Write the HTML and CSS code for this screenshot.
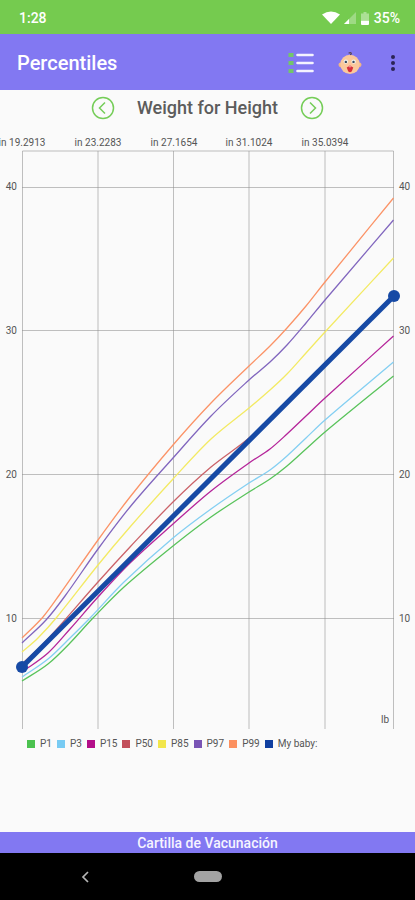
FILE: index.html
```html
<!DOCTYPE html>
<html lang="en">
<head>
<meta charset="utf-8">
<meta name="viewport" content="width=device-width, initial-scale=1">
<title>Percentiles</title>
<link rel="stylesheet" href="styles.css">
</head>
<body>
<div class="status">
  <span>1:28</span>
  <div class="status-icons">
    <svg width="18" height="14" viewBox="0 0 18 14" aria-hidden="true"><path d="M0 3.500Q9-2.500 18 3.500L9 13Z" fill="#fff"/></svg>
    <svg width="12" height="12" viewBox="0 0 12 12" aria-hidden="true"><path d="M12 0V12H0Z" fill="#fff" opacity=".3"/><path d="M5 7V12H0Z" fill="#fff"/></svg>
    <svg width="8" height="13" viewBox="0 0 8 13" aria-hidden="true"><path d="M2.500 0h3v1.500H8V8H0V1.500h2.500z" fill="#fff" opacity=".4"/><path d="M0 8.500h8V12q0 1-1 1H1q-1 0-1-1z" fill="#fff"/></svg>
    <span>35%</span>
  </div>
</div>
<header class="appbar">
  <h1>Percentiles</h1>
  <div class="actions">
    <button type="button" aria-label="List">
      <svg width="26" height="22" viewBox="0 0 26 22"><path d="M.5 1h5v4h-5zM.5 9h5v4h-5zM.5 17h5v4h-5z" fill="#73c66a"/><path d="M9.500 3h15M9.500 11h15M9.500 19h15" stroke="#f4f3ff" stroke-width="2.600" stroke-linecap="round"/></svg>
    </button>
    <button type="button" aria-label="Baby">
      <svg width="24" height="24" viewBox="0 0 26 26"><circle cx="3" cy="15" r="2.500" fill="#f1b586"/><circle cx="23" cy="15" r="2.500" fill="#f1b586"/><ellipse cx="13" cy="14.500" rx="10.500" ry="10.500" fill="#fbc89c"/><path d="M11.500 2.500q2-1.500 3 0 0 1.500-1.500 1.500" fill="none" stroke="#594457" stroke-width="1.200"/><circle cx="8.500" cy="11.500" r="2.400" fill="#eef1ef"/><circle cx="17" cy="11.500" r="2.400" fill="#eef1ef"/><circle cx="8.500" cy="11.800" r="1.300" fill="#3d4a5e"/><circle cx="16.800" cy="11.800" r="1.300" fill="#3d4a5e"/><path d="M9.500 18q3.500-3.500 7 0l-1.500 4q-2 2-4 0z" fill="#d8303c"/><circle cx="13" cy="16.500" r="1.300" fill="#f08f91"/></svg>
    </button>
    <button type="button" aria-label="More options">
      <svg width="6" height="18" viewBox="0 0 6 18"><g fill="#2b2456"><circle cx="3" cy="3" r="2"/><circle cx="3" cy="9" r="2"/><circle cx="3" cy="15" r="2"/></g></svg>
    </button>
  </div>
</header>
<main>
  <div class="picker">
    <button type="button" aria-label="Previous chart">
      <svg width="24" height="24" viewBox="0 0 24 24" fill="none" stroke="#75cd58"><circle cx="12" cy="12" r="10.500" stroke-width="1.500"/><path d="M14 6.500L8.500 12l5.500 5.500" stroke-width="1.500"/></svg>
    </button>
    <h2>Weight for Height</h2>
    <button type="button" aria-label="Next chart">
      <svg width="24" height="24" viewBox="0 0 24 24" fill="none" stroke="#75cd58"><circle cx="12" cy="12" r="10.500" stroke-width="1.500"/><path d="M10 6.500L15.500 12 10 17.500" stroke-width="1.500"/></svg>
    </button>
  </div>
  <svg class="chart" viewBox="0 125 415 608" role="img" aria-label="Weight for Height percentiles">
    <path class="grid" d="M22.500 729V151H393.500V729M98 151V729M173.500 151V729M249 151V729M325 151V729M22 187.500H394M22 330.500H394M22 474.500H394M22 618.500H394"/>
    <g class="ticks" text-anchor="middle">
      <text x="22" y="146">in 19.2913</text><text x="98" y="146">in 23.2283</text><text x="174" y="146">in 27.1654</text><text x="249" y="146">in 31.1024</text><text x="325" y="146">in 35.0394</text>
    </g>
    <g class="ticks" text-anchor="end">
      <text x="17" y="190">40</text><text x="17" y="334">30</text><text x="17" y="478">20</text><text x="17" y="622">10</text><text x="389" y="723">lb</text>
    </g>
    <g class="ticks">
      <text x="399" y="190">40</text><text x="399" y="334">30</text><text x="399" y="478">20</text><text x="399" y="622">10</text>
    </g>
    <g id="curves" class="curves"></g>
    <path class="baby-line" d="M22 667L394 296"/>
    <circle class="baby-dot" cx="22" cy="667" r="6"/>
    <circle class="baby-dot" cx="394" cy="296" r="6"/>
  </svg>
  <ul class="legend">
    <li class="p1">P1</li><li class="p3">P3</li><li class="p15">P15</li><li class="p50">P50</li><li class="p85">P85</li><li class="p97">P97</li><li class="p99">P99</li><li class="baby">My baby:</li>
  </ul>
</main>
<footer class="banner">Cartilla de Vacunación</footer>
<nav class="sysnav">
  <button type="button" aria-label="Back"><svg width="8" height="12" viewBox="0 0 8 12"><path d="M7 1L2 6l5 5" fill="none" stroke="#b5b5b5" stroke-width="1.700"/></svg></button>
  <button type="button" class="pill" aria-label="Home"></button>
  <span></span>
</nav>
<script src="chart.js"></script>
</body>
</html>
```
FILE: styles.css
```css
* { box-sizing: border-box; }
body {
  margin: 0;
  min-height: 100vh;
  display: flex;
  flex-direction: column;
  background: #fafafa;
  font-family: Roboto, sans-serif;
  color: #5c5c5c;
}
button {
  display: flex;
  padding: 0;
  border: 0;
  background: none;
}
h1, h2 { margin: 0; font-weight: 500; }
.status {
  display: flex;
  justify-content: space-between;
  align-items: center;
  height: 34px;
  padding: 2px 15px 0 19px;
  background: #75cb4f;
  color: #fff;
  font-size: 14px;
  font-weight: 500;
}
.status-icons { display: flex; align-items: center; gap: 5px; }
.status-icons svg:first-child { margin-right: -1px; }
.appbar {
  display: flex;
  justify-content: space-between;
  align-items: center;
  height: 56px;
  padding: 2px 19px 0 17px;
  background: #8278f2;
  color: #fff;
}
.appbar h1 { font-size: 20px; }
.actions { display: flex; align-items: center; gap: 24px; }
.actions button:last-child { margin-left: 4px; }
main { flex: 1; }
.picker {
  display: flex;
  justify-content: center;
  align-items: center;
  gap: 22px;
  height: 35px;
}
.picker h2 { font-size: 18px; }
.chart { display: block; width: 100%; }
.grid { fill: none; stroke: #8c8c8c; stroke-opacity: .55; stroke-width: 1; }
.ticks { font-size: 10px; fill: #555; }
.curves { fill: none; stroke-width: 1.300; }
.baby-line { stroke: #174aa5; stroke-width: 5; }
.baby-dot { fill: #174aa5; }
.legend {
  display: flex;
  gap: 5px;
  margin: 0;
  padding: 5px 0 0 27px;
  list-style: none;
  font-size: 10px;
  line-height: 12px;
}
.legend li { display: flex; align-items: center; gap: 5px; color: #555; }
.legend li::before { content: ""; width: 8px; height: 8px; background: var(--c); }
.p1 { --c: #4bc24f; }
.p3 { --c: #78cbf3; }
.p15 { --c: #b30e89; }
.p50 { --c: #c24f5b; }
.p85 { --c: #f2e64b; }
.p97 { --c: #7954b5; }
.p99 { --c: #fc905f; }
.baby { --c: #103fa0; }
.banner {
  height: 21px;
  background: #8278f2;
  color: #f6f4ff;
  font-size: 14px;
  line-height: 22px;
  font-weight: 500;
  text-align: center;
}
.sysnav {
  display: grid;
  grid-template-columns: 1fr 28px 1fr;
  align-items: center;
  height: 47px;
  background: #000;
}
.sysnav button { justify-self: center; }
.sysnav button:first-child { margin-right: 24px; }
.sysnav .pill { width: 28px; height: 11px; border-radius: 6px; background: #a3a3a3; }
```
FILE: chart.js
```js
const series = [
  { color: "#59c35b", points: [[22,681],[48,664],[70,643],[93,618],[124,587],[173,546],[211,517],[249,492],[270,479],[287,466],[306,449],[325,432],[393.5,376]] },
  { color: "#84cff2", points: [[22,677],[48,659],[70,638],[91,617],[124,582],[173,538],[211,509],[249,483],[270,470],[287,456],[306,438],[325,420],[393.5,362]] },
  { color: "#b5259a", points: [[22,672],[48,653],[70,629],[98,597],[130,563],[173,524],[211,491],[249,463],[270,449],[287,434],[306,416],[325,398],[393.5,336]] },
  { color: "#cb6369", points: [[22,664],[46,641],[98,582],[130,547],[173,502],[211,467],[249,438],[287,402],[325,365],[393.5,297]] },
  { color: "#f3ea63", points: [[22,652],[38,638],[57,617],[98,565],[130,527],[173,479],[211,439],[249,408],[270,390],[287,374],[306,353],[325,332],[393.5,258]] },
  { color: "#8166be", points: [[22,643],[46,620],[65,596],[98,549],[130,507],[173,458],[211,416],[249,380],[270,362],[287,345],[306,323],[325,300],[393.5,220]] },
  { color: "#fb9367", points: [[22,638],[43,617],[60,594],[98,540],[130,497],[173,445],[211,403],[249,366],[270,346],[287,328],[306,306],[325,282],[393.5,198]] }
];

// Cubic Hermite curve through the points, with the slope at each one taken from its neighbours
function smooth(p) {
  const slopes = p.map((b, i) => {
    const a = p[i - 1] || b, c = p[i + 1] || b;
    return (c[1] - a[1]) / (c[0] - a[0]);
  });
  let d = `M${p[0]}`;
  for (let i = 0; i < p.length - 1; i++) {
    const b = p[i], c = p[i + 1], h = (c[0] - b[0]) / 3;
    d += `C${b[0] + h},${b[1] + h * slopes[i]} ${c[0] - h},${c[1] - h * slopes[i + 1]} ${c}`;
  }
  return d;
}

const group = document.getElementById("curves");
for (const s of series) {
  const path = document.createElementNS("http://www.w3.org/2000/svg", "path");
  path.setAttribute("d", smooth(s.points));
  path.setAttribute("stroke", s.color);
  group.append(path);
}
```
